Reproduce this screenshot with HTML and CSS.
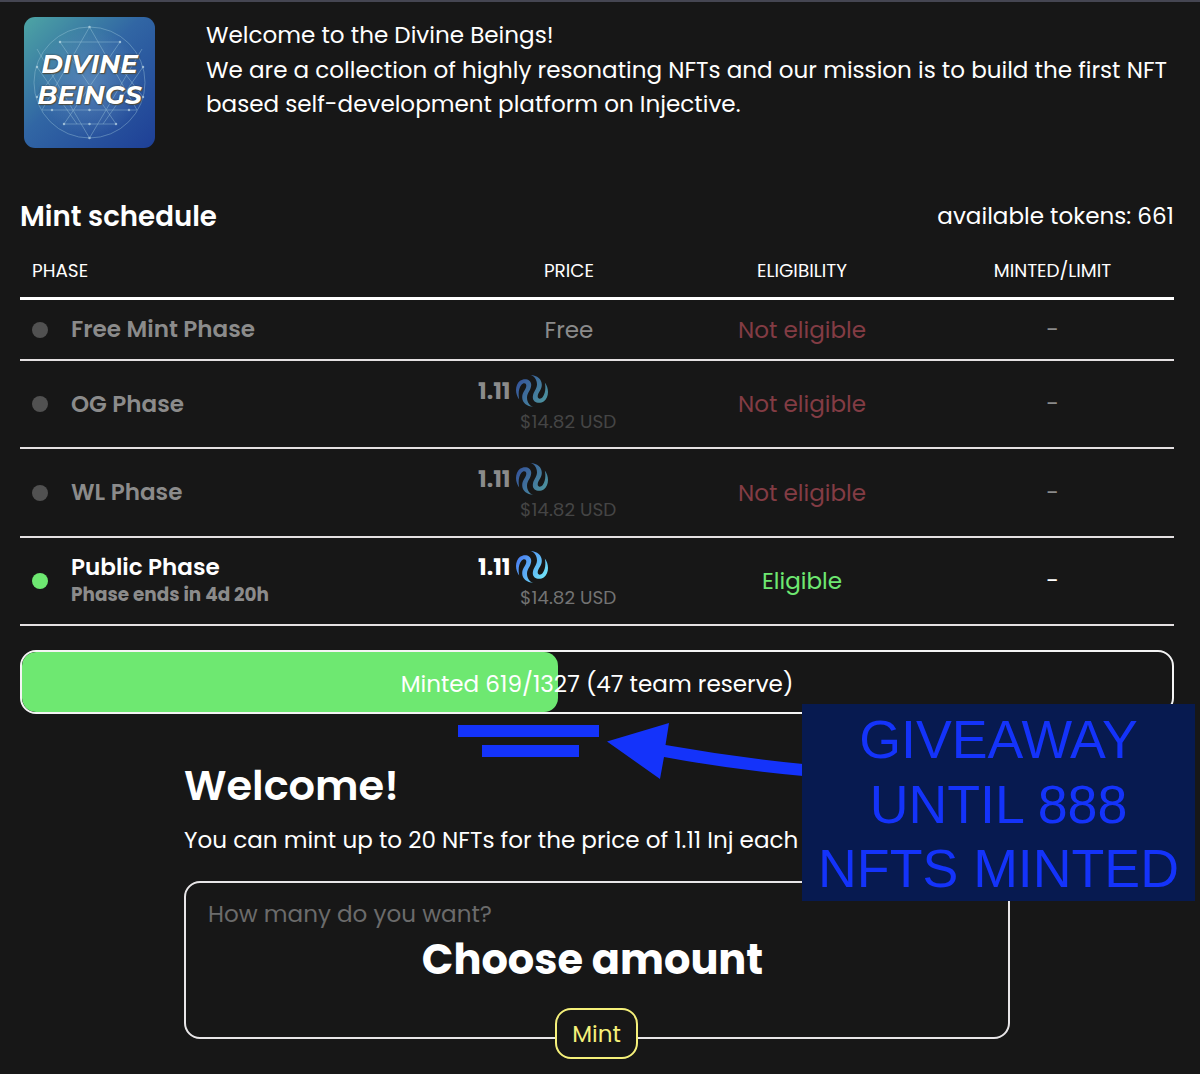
FILE: index.html
```html
<!DOCTYPE html>
<html lang="en">
<head>
    <meta charset="UTF-8">
    <meta name="viewport" content="width=device-width, initial-scale=1.0">
    <title>Divine Beings Mint</title>
    <link rel="stylesheet" href="styles.css">
</head>
<body>
    <svg width="0" height="0" class="defs">
        <defs>
            <linearGradient id="inj" gradientUnits="userSpaceOnUse" x1="2" y1="6" x2="30" y2="24">
                <stop offset="0" stop-color="#4a7ff2"/>
                <stop offset="1" stop-color="#70e2f8"/>
            </linearGradient>
            <symbol id="inj-logo" viewBox="0 0 32 32">
                <path d="M3.200 24.500C-1.500 18.500-0.800 9.500 4 5.800C8.500 2.500 15.600 4.300 15.200 10.200C14.800 15.500 11.200 17.500 11 22.500C11 27 13.500 30.800 17.500 32C10.500 31.700 6 27.500 6.200 22C6.400 16.500 10.300 14.500 10.300 10.500C10.300 8 7.300 7.500 5.300 10C2.800 13 2 19 3.200 24.500Z"/>
                <path d="M28.800 7.500C33.500 13.500 32.800 22.500 28 26.200C23.500 29.500 16.400 27.700 16.800 21.800C17.200 16.500 20.800 14.500 21 9.500C21 5 18.500 1.200 14.500 0C21.500 0.300 26 4.500 25.800 10C25.600 15.500 21.700 17.500 21.700 21.500C21.700 24 24.700 24.500 26.700 22C29.200 19 30 13 28.800 7.500Z"/>
            </symbol>
        </defs>
    </svg>

    <div class="page">
        <div class="collection">
            <div class="logo">
                <svg class="logo-art" viewBox="0 0 131 131">
                    <circle cx="65.500" cy="65.500" r="55.500"/>
                    <path d="M65.500 10L113 93H18ZM65.500 121L13 32M65.500 121L118 32M36 25H96L40 107H92ZM13 50L53 107M119 50L79 107M13 80L36 50M119 80L96 50"/>
                    <path class="points" d="M65.500 10v0M65.500 121v0M36 25h0M96 25h0M40 107h0M92 107h0M65.500 107h0M28 93h0M105 93h0M65.500 93h0M13 50h0M119 50h0M13 80h0M119 80h0"/>
                </svg>
                <div class="logo-name">DIVINE<br>BEINGS</div>
            </div>
            <div class="description">
                <p>Welcome to the Divine Beings!</p>
                <p>We are a collection of highly resonating NFTs and our mission is to build the first NFT</p>
                <p>based self-development platform on Injective.</p>
            </div>
        </div>

        <div class="schedule-head">
            <h3>Mint schedule</h3>
            <span>available tokens: 661</span>
        </div>

        <div class="schedule">
            <div class="row head">
                <div>PHASE</div>
                <div class="center">PRICE</div>
                <div class="center">ELIGIBILITY</div>
                <div class="center">MINTED/LIMIT</div>
            </div>
            <div class="row free inactive">
                <div class="phase"><i class="dot"></i><b>Free Mint Phase</b></div>
                <div class="center">Free</div>
                <div class="center not-eligible">Not eligible</div>
                <div class="center">-</div>
            </div>
            <div class="row inactive">
                <div class="phase"><i class="dot"></i><b>OG Phase</b></div>
                <div class="price">
                    <div class="amount">1.11 <svg><use href="#inj-logo"/></svg></div>
                    <div class="usd">$14.82 USD</div>
                </div>
                <div class="center not-eligible">Not eligible</div>
                <div class="center">-</div>
            </div>
            <div class="row inactive">
                <div class="phase"><i class="dot"></i><b>WL Phase</b></div>
                <div class="price">
                    <div class="amount">1.11 <svg><use href="#inj-logo"/></svg></div>
                    <div class="usd">$14.82 USD</div>
                </div>
                <div class="center not-eligible">Not eligible</div>
                <div class="center">-</div>
            </div>
            <div class="row">
                <div class="phase">
                    <i class="dot"></i>
                    <div class="active-phase">
                        <b>Public Phase</b>
                        <div class="ends">Phase ends in 4d 20h</div>
                    </div>
                </div>
                <div class="price">
                    <div class="amount">1.11 <svg><use href="#inj-logo"/></svg></div>
                    <div class="usd">$14.82 USD</div>
                </div>
                <div class="center eligible">Eligible</div>
                <div class="center">-</div>
            </div>
        </div>

        <div class="progress">
            <div class="progress-bar" style="width: 46.65%"></div>
            <span class="progress-text">Minted 619/1327 (47 team reserve)</span>
        </div>

        <div class="mint">
            <h1>Welcome!</h1>
            <p class="info">You can mint up to 20 NFTs for the price of 1.11 Inj each</p>
            <div class="amount-box">
                <label>How many do you want?</label>
                <div class="choose">Choose amount</div>
                <button class="mint-button">Mint</button>
            </div>
        </div>
    </div>

    <svg class="arrow" viewBox="0 0 350 60">
        <path d="M0 5H141V17H0ZM24 25H121V37H24ZM149 21.500L211 3L207.500 25Q275 37 345 44V56Q270 49 206 37L202 59Z"/>
    </svg>
    <div class="giveaway">GIVEAWAY<br>UNTIL 888<br>NFTS MINTED</div>
</body>
</html>
```
FILE: styles.css
```css
* {
    box-sizing: border-box;
}
body {
    margin: 0;
    height: 1074px;
    position: relative;
    overflow: hidden;
    background-color: #171717;
    border-top: 2px solid #454652;
    color: #fff;
    font-family: Poppins, Inter, sans-serif;
    font-size: 23.07px;
}
h1, h3, p {
    margin: 0;
}
.defs {
    position: absolute;
}
.page {
    padding: 15px 26px 0 20px;
}
.collection {
    display: flex;
    height: 165px;
}
.logo {
    position: relative;
    width: 131px;
    height: 131px;
    margin-left: 4px;
    border-radius: 11px;
    background: radial-gradient(circle at 50% 50%, rgba(130, 170, 205, 0.45), transparent 60%), linear-gradient(135deg, #4da5a4 0%, #3166a4 45%, #1e3f96 100%);
}
.logo-name {
    position: relative;
    padding-top: 32px;
    font-family: Montserrat, Poppins, sans-serif;
    font-size: 26.2px;
    font-weight: 700;
    font-style: italic;
    line-height: 31px;
    text-align: center;
    text-shadow: 0 0 2px #333, 1px 1px 1px #554;
}
.logo-art {
    position: absolute;
    left: 0;
    top: 0;
    fill: none;
    stroke: #a8d0e0;
    stroke-width: 0.6;
    opacity: 0.65;
}
.points {
    stroke: #d4ecf2;
    stroke-width: 2.5;
    stroke-linecap: round;
}
.description {
    margin-left: 51px;
    padding-top: 1px;
    line-height: 34.6px;
    white-space: nowrap;
}
.schedule-head {
    display: flex;
    justify-content: space-between;
    align-items: center;
    height: 68px;
}
.schedule-head h3 {
    padding-top: 1px;
    font-size: 27.65px;
    font-weight: 600;
}
.row {
    display: grid;
    grid-template-columns: 444px 209px 257px 244px;
    align-items: center;
    height: 88.4px;
    border-bottom: 2px solid #e4e0e2;
}
.row.head {
    height: 50px;
    padding-bottom: 6px;
    border-bottom: 3px solid #fff;
    font-size: 18.43px;
}
.row.head div:first-child {
    padding-left: 12px;
}
.row.free {
    height: 61px;
}
.center {
    padding-left: 1px;
    text-align: center;
}
.phase {
    display: flex;
    align-items: center;
    padding-left: 12px;
}
.phase b {
    display: block;
    font-weight: 600;
    line-height: 30px;
    margin-bottom: 1px;
}
.active-phase b {
    margin-bottom: 0;
}
.active-phase {
    padding-bottom: 2px;
}
.ends {
    color: #8b8b8b;
    font-size: 18.43px;
    font-weight: 700;
    line-height: 26px;
}
.dot {
    width: 16px;
    height: 16px;
    margin-right: 23px;
    border-radius: 50%;
    background-color: #6ee871;
}
.inactive {
    color: #8b8b8b;
}
.inactive .dot {
    background-color: #515151;
}
.price {
    padding: 3px 0 0 14px;
}
.amount {
    display: flex;
    align-items: center;
    height: 32px;
    font-weight: 700;
}
.amount svg {
    width: 32px;
    height: 32px;
    margin-left: 5px;
    fill: url(#inj);
}
.inactive .amount svg {
    opacity: 0.6;
}
.usd {
    padding-left: 42px;
    color: #737373;
    font-size: 18.43px;
    line-height: 30px;
}
.inactive .usd {
    color: #454545;
}
.not-eligible {
    color: #833c44;
}
.eligible {
    color: #6ee871;
}
.progress {
    position: relative;
    height: 64px;
    margin-top: 23.4px;
    border: 2px solid #f4f4f4;
    border-radius: 16px;
    overflow: hidden;
}
.progress-bar {
    height: 100%;
    border-radius: 14px;
    background-color: #6ee871;
}
.progress-text {
    position: absolute;
    inset: 0;
    line-height: 64px;
    text-align: center;
}
.mint {
    width: 826px;
    margin: 45px 0 0 164px;
}
.mint h1 {
    font-size: 41.5px;
    font-weight: 600;
    line-height: 54px;
}
.info {
    margin-top: 10px;
    line-height: 34px;
}
.amount-box {
    display: flex;
    flex-direction: column;
    align-items: center;
    height: 158px;
    margin-top: 24.5px;
    padding-top: 14px;
    border: 2px solid #e8e6e8;
    border-radius: 16px;
}
.amount-box label {
    align-self: flex-start;
    padding-left: 22px;
    color: #6b6b6b;
    line-height: 34px;
}
.choose {
    padding-right: 9px;
    font-size: 41.5px;
    font-weight: 700;
    line-height: 58px;
}
.mint-button {
    flex-shrink: 0;
    width: 83px;
    height: 51px;
    margin: 19px 1px 0 0;
    border: 2px solid #f5f07a;
    border-radius: 16px;
    background-color: #171717;
    color: #f5f07a;
    font: inherit;
}
.arrow {
    position: absolute;
    left: 458px;
    top: 718px;
    width: 350px;
    height: 60px;
    fill: #1433fa;
}
.giveaway {
    position: absolute;
    left: 802px;
    top: 702px;
    width: 393px;
    height: 197px;
    padding-top: 3px;
    background-color: #071a50;
    color: #1433fa;
    font-family: "Liberation Sans", sans-serif;
    font-size: 53.7px;
    line-height: 64.5px;
    text-align: center;
}
```
